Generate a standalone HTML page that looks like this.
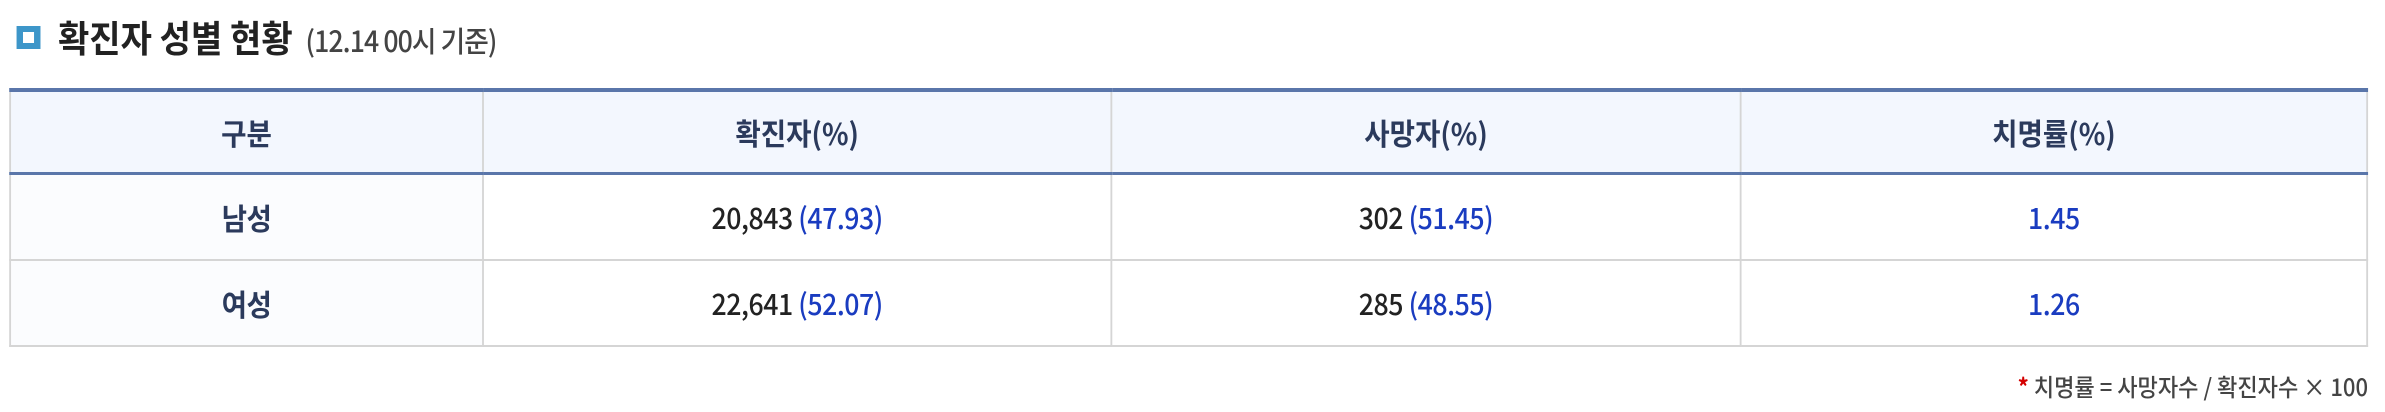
<!DOCTYPE html>
<html><head><meta charset="utf-8">
<style>
html,body{margin:0;padding:0;background:#fff;}
body{width:2385px;height:412px;overflow:hidden;position:relative;font-family:"Liberation Sans","Noto Sans CJK KR",sans-serif;}
#w{position:absolute;left:0;top:0;width:2592px;height:412px;transform:scale(0.92,1);transform-origin:0 0;}
.icon{position:absolute;left:18px;top:26px;width:12px;height:11px;border:6px solid #3d96c9;border-left-width:7px;border-right-width:7px;}
.title{position:absolute;left:63px;top:11px;font-family:"Noto Sans CJK KR",sans-serif;font-weight:700;font-size:37px;color:#222;line-height:50px;white-space:nowrap;}
.title span{font-size:29px;font-weight:500;color:#444;margin-left:14px;letter-spacing:-1px;}
table{position:absolute;left:10px;top:88px;width:2564px;border-collapse:collapse;font-family:"Noto Sans CJK KR",sans-serif;table-layout:fixed;}
th,td{text-align:center;border:2px solid #d5d5d5;padding:0;white-space:nowrap;}
th{background:#f3f7fe;height:80px;font-size:30px;font-weight:700;color:#2b3a5c;border-top:4px solid #5a76aa;border-bottom:3px solid #5a76aa;}
td{height:84px;font-size:29px;color:#222;font-weight:500;letter-spacing:-0.5px;}
td.g{font-weight:700;color:#2b3a5c;font-size:30px;background:#fbfcfe;}
.b{color:#1a3cc0;}
.foot{position:absolute;right:18px;top:366px;font-family:"Noto Sans CJK KR",sans-serif;font-size:24px;font-weight:500;color:#444;line-height:40px;white-space:nowrap;}
.foot b{color:#d40000;}
</style></head><body>
<div id="w">
<div class="icon"></div>
<div class="title">확진자 성별 현황<span>(12.14 00시 기준)</span></div>
<table>
<colgroup><col style="width:514px"><col style="width:683px"><col style="width:684px"><col></colgroup>
<tr><th>구분</th><th>확진자(%)</th><th>사망자(%)</th><th>치명률(%)</th></tr>
<tr><td class="g">남성</td><td>20,843 <span class="b">(47.93)</span></td><td>302 <span class="b">(51.45)</span></td><td class="b">1.45</td></tr>
<tr><td class="g">여성</td><td>22,641 <span class="b">(52.07)</span></td><td>285 <span class="b">(48.55)</span></td><td class="b">1.26</td></tr>
</table>
<div class="foot"><b>*</b> 치명률 = 사망자수 / 확진자수 × 100</div>
</div>
</body></html>
